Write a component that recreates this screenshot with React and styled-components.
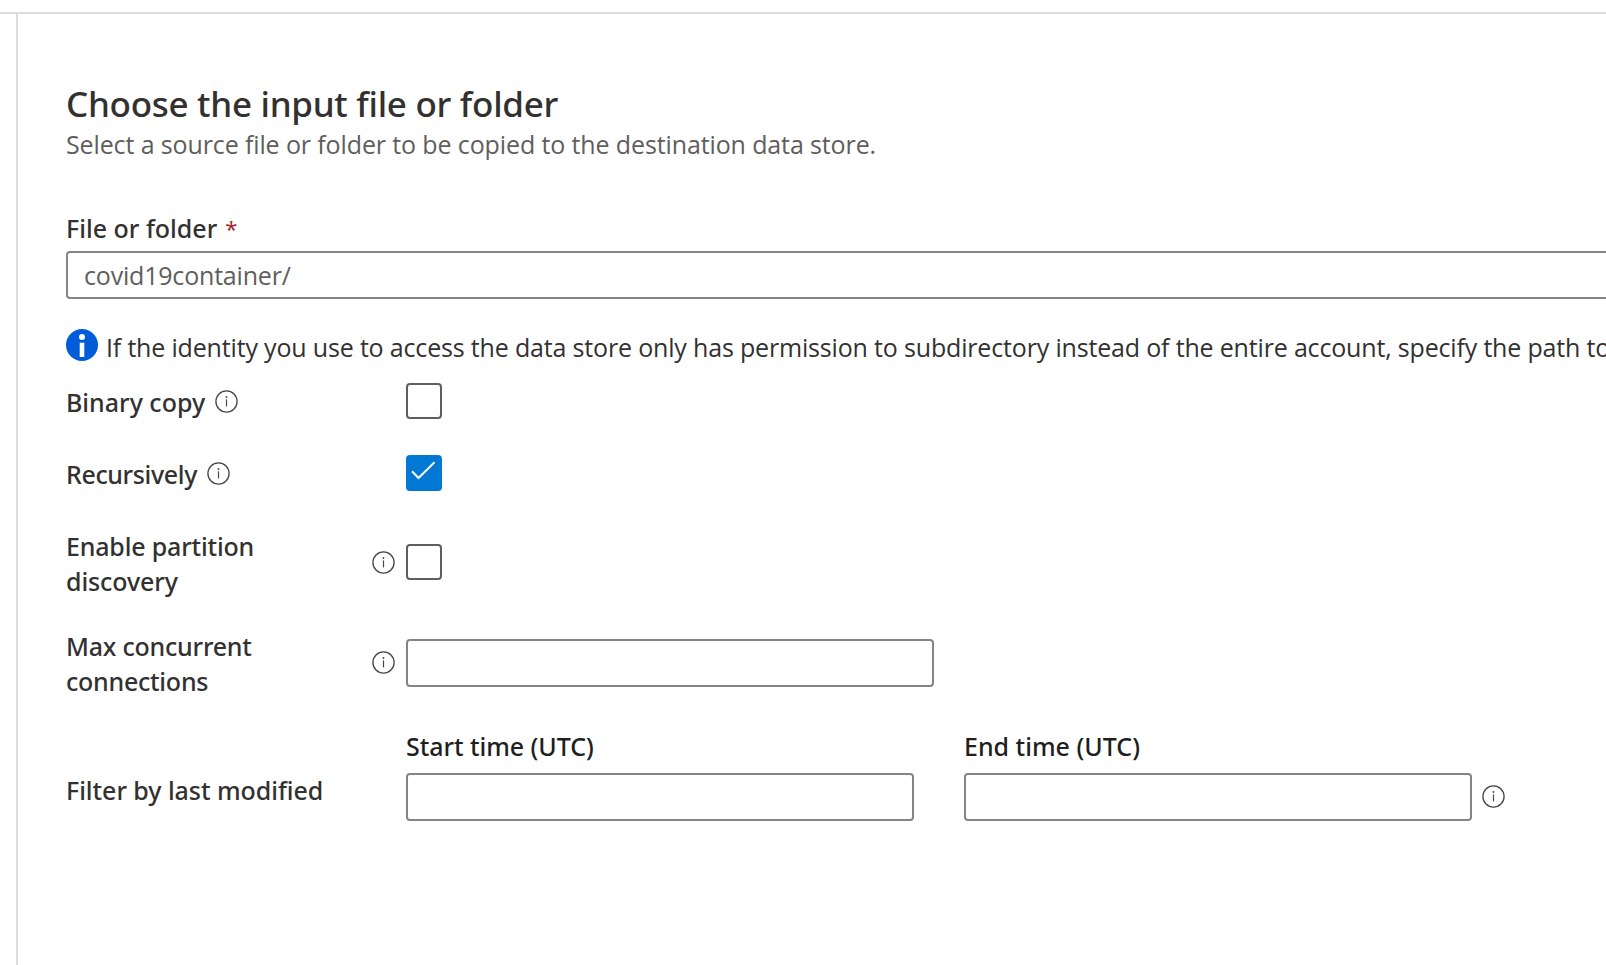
import React from "react";
import styled, { createGlobalStyle } from "styled-components";

const GlobalStyle = createGlobalStyle`
  * { box-sizing: border-box; }
  html, body { margin: 0; background: #fff; overflow: hidden; }
`;

const Page = styled.div`
  width: 100vw;
  height: 100vh;
  padding-top: 12px;
  display: flex;
  flex-direction: column;
  overflow: hidden;
  color: #323130;
  background: #fff;
`;

const Divider = styled.div`
  flex: none;
  height: 2px;
  background: #dcdcdc;
`;

const Panel = styled.main`
  flex: 1;
  margin-left: 16px;
  padding: 68px 0 0 48px;
  border-left: 2px solid #dcdcdc;
  overflow: hidden;
`;

const Title = styled.h1`
  margin: 0;
  font: 500 35px/44px "Noto Sans", sans-serif;
  letter-spacing: -0.29px;
`;

const Text = styled.p`
  margin: 0;
  font: 400 25px/35px "Open Sans", sans-serif;
  letter-spacing: ${(p) => p.$spacing || 0}px;
  color: ${(p) => p.$color || "#323130"};
  white-space: nowrap;
`;

const Subtitle = styled(Text)`
  margin-top: 1px;
`;

const Label = styled.span`
  font: 500 25px/35px "Noto Sans", sans-serif;
  letter-spacing: ${(p) => p.$spacing || 0}px;
  color: ${(p) => p.$color || "#323130"};
  white-space: nowrap;
`;

const Line = styled(Label)`
  display: block;
`;

const FileLabel = styled.div`
  margin-top: 49px;
  height: 35px;
  display: flex;
  gap: 8px;
`;

const Required = styled(Label)`
  font-size: 22px;
  font-weight: 400;
`;

const Input = styled.div`
  width: ${(p) => p.$width}px;
  height: 48px;
  padding: 5px 0 0 16px;
  border: 2px solid #858585;
  border-radius: 4px;
  background: #fff;
`;

const PathInput = styled(Input)`
  margin-top: 5px;
`;

const Notice = styled.div`
  margin-top: 30px;
  height: 35px;
  display: flex;
  gap: 8px;
`;

const NoticeText = styled(Text)`
  padding-top: 1px;
`;

const Row = styled.div`
  display: grid;
  grid-template-columns: 340px auto;
  align-items: center;
  height: ${(p) => p.$height}px;
  margin-top: ${(p) => p.$gap}px;
`;

const LabelCell = styled.div`
  display: flex;
  align-items: center;
  justify-content: ${(p) => (p.$spread ? "space-between" : "flex-start")};
  gap: 10px;
  padding-right: 11px;
`;

const LabelText = styled.div`
  padding-top: ${(p) => p.$drop || 3}px;
`;

const Checkbox = styled.div`
  width: 36px;
  height: 36px;
  border: 2px solid ${(p) => (p.$checked ? "#0078d4" : "#605e5c")};
  border-radius: 4px;
  background: ${(p) => (p.$checked ? "#0078d4" : "#fff")};
`;

const FilterRow = styled.div`
  display: grid;
  grid-template-columns: 340px auto;
  align-items: end;
  margin-top: 29px;
`;

const FilterLabel = styled.div`
  height: 35px;
  margin-bottom: 13px;
`;

const Fields = styled.div`
  display: flex;
  align-items: flex-end;
`;

const Field = styled.div`
  display: flex;
  flex-direction: column;
  gap: 9px;
  margin-right: ${(p) => p.$after}px;
`;

const IconSlot = styled.div`
  height: 48px;
  padding-bottom: 2px;
  display: flex;
  align-items: center;
`;

const Svg = styled.svg`
  display: block;
  flex: none;
  margin-bottom: ${(p) => p.$lift || 0}px;
`;

const InfoIcon = ({ lift }) => (
  <Svg $lift={lift} width="23" height="23" viewBox="0 0 23 23" fill="none">
    <circle cx="11.5" cy="11.5" r="10.6" stroke="#484644" strokeWidth="1.3" />
    <path d="M11.5 9.4V16.4" stroke="#484644" strokeWidth="1.2" />
    <circle cx="11.5" cy="7" r="0.9" fill="#484644" />
  </Svg>
);

const NoticeIcon = () => (
  <Svg width="32" height="32" viewBox="0 0 32 32">
    <circle cx="16" cy="16" r="16" fill="#015cda" />
    <circle cx="16" cy="8" r="3" fill="#fff" />
    <path d="M13.7 13.7H18.3V28H13.7Z" fill="#fff" />
  </Svg>
);

const CheckMark = () => (
  <Svg width="32" height="32" viewBox="0 0 32 32" fill="none">
    <path d="M4 14.3L10.5 21L26.5 5.2" stroke="#fff" strokeWidth="2" />
  </Svg>
);

export default function App() {
  return (
    <Page>
      <GlobalStyle />
      <Divider />
      <Panel>
        <Title>Choose the input file or folder</Title>
        <Subtitle $spacing={-0.12} $color="#605e5c">
          Select a source file or folder to be copied to the destination data store.
        </Subtitle>

        <FileLabel>
          <Label>File or folder</Label>
          <Required $color="#a4262c">*</Required>
        </FileLabel>
        <PathInput $width={1600}>
          <Text $spacing={-0.19} $color="#605e5c">covid19container/</Text>
        </PathInput>

        <Notice>
          <NoticeIcon />
          <NoticeText $spacing={-0.17}>
            If the identity you use to access the data store only has permission to subdirectory instead of the entire account, specify the path to
          </NoticeText>
        </Notice>

        <Row $height={36} $gap={18}>
          <LabelCell>
            <LabelText><Label>Binary copy</Label></LabelText>
            <InfoIcon />
          </LabelCell>
          <Checkbox />
        </Row>

        <Row $height={36} $gap={36}>
          <LabelCell>
            <LabelText><Label $spacing={-0.37}>Recursively</Label></LabelText>
            <InfoIcon />
          </LabelCell>
          <Checkbox $checked><CheckMark /></Checkbox>
        </Row>

        <Row $height={74} $gap={35}>
          <LabelCell $spread>
            <LabelText $drop={4}>
              <Line $spacing={-0.18}>Enable partition</Line>
              <Line $spacing={-0.1}>discovery</Line>
            </LabelText>
            <InfoIcon />
          </LabelCell>
          <Checkbox />
        </Row>

        <Row $height={74} $gap={27}>
          <LabelCell $spread>
            <LabelText $drop={2}>
              <Line $spacing={-0.22}>Max concurrent</Line>
              <Line $spacing={-0.25}>connections</Line>
            </LabelText>
            <InfoIcon lift={2} />
          </LabelCell>
          <Input $width={528} />
        </Row>

        <FilterRow>
          <FilterLabel><Label $spacing={-0.05}>Filter by last modified</Label></FilterLabel>
          <Fields>
            <Field $after={50}>
              <Label $spacing={-0.05} $color="#201f1e">Start time (UTC)</Label>
              <Input $width={508} />
            </Field>
            <Field $after={10}>
              <Label $color="#201f1e">End time (UTC)</Label>
              <Input $width={508} />
            </Field>
            <IconSlot><InfoIcon /></IconSlot>
          </Fields>
        </FilterRow>
      </Panel>
    </Page>
  );
}
